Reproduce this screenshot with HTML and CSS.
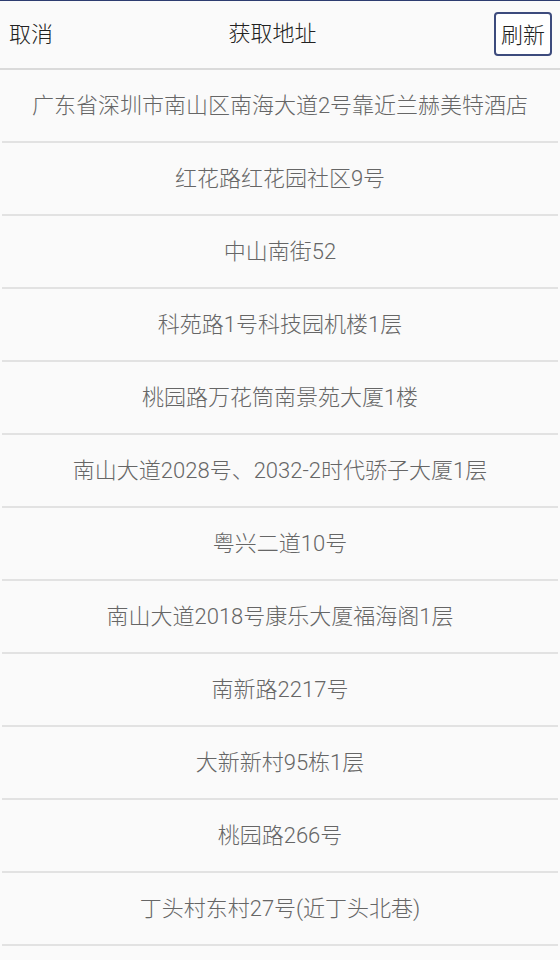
FILE: index.html
```html
<!DOCTYPE html>
<html lang="zh-CN">
<head>
    <meta charset="UTF-8">
    <meta name="viewport" content="width=device-width, initial-scale=1.0">
    <title>获取地址</title>
    <link rel="stylesheet" href="styles.css">
</head>
<body>
    <div class="topBar">
        <span class="cancel">取消</span>
        <span class="title">获取地址</span>
        <button class="refresh" type="button">刷新</button>
    </div>
    <ul class="addrList">
        <li>广东省深圳市南山区南海大道2号靠近兰赫美特酒店</li>
        <li>红花路红花园社区9号</li>
        <li>中山南街52</li>
        <li>科苑路1号科技园机楼1层</li>
        <li>桃园路万花筒南景苑大厦1楼</li>
        <li>南山大道2028号、2032-2时代骄子大厦1层</li>
        <li>粤兴二道10号</li>
        <li>南山大道2018号康乐大厦福海阁1层</li>
        <li>南新路2217号</li>
        <li>大新新村95栋1层</li>
        <li>桃园路266号</li>
        <li>丁头村东村27号(近丁头北巷)</li>
    </ul>
</body>
</html>
```

FILE: styles.css
```css
html{
    height: 100%;
}
body{
    margin: 0;
    padding: 0;
    background: #fafafa;
    font-family: Roboto, "Noto Sans CJK SC", sans-serif;
    font-size: 22px;
    font-weight: 300;
    color: #222;
}

.topBar{
    position: relative;
    display: flex;
    align-items: center;
    justify-content: space-between;
    height: 67px;
    padding: 0 8px 0 9px;
    border-top: 1px solid #2d3c70;
    border-bottom: 2px solid #dadada;
}
.cancel{
    padding-bottom: 5px;
}
.title{
    position: absolute;
    left: 0;
    right: 0;
    top: 14px;
    text-align: center;
    pointer-events: none;
    margin-left: -15px;
}
.refresh{
    width: 58px;
    height: 44px;
    padding: 0 0 3px;
    margin-bottom: 1px;
    font-family: inherit;
    font-size: 22px;
    font-weight: 300;
    color: #222;
    background: #fff;
    border: 2px solid #3d4b7d;
    border-radius: 4px;
}

.addrList{
    list-style: none;
    margin: 0;
    padding: 0;
}
.addrList li{
    display: flex;
    align-items: center;
    justify-content: center;
    height: 66px;
    padding-bottom: 5px;
    margin: 0 2px;
    border-bottom: 2px solid #e2e2e2;
    color: #666;
}
```
